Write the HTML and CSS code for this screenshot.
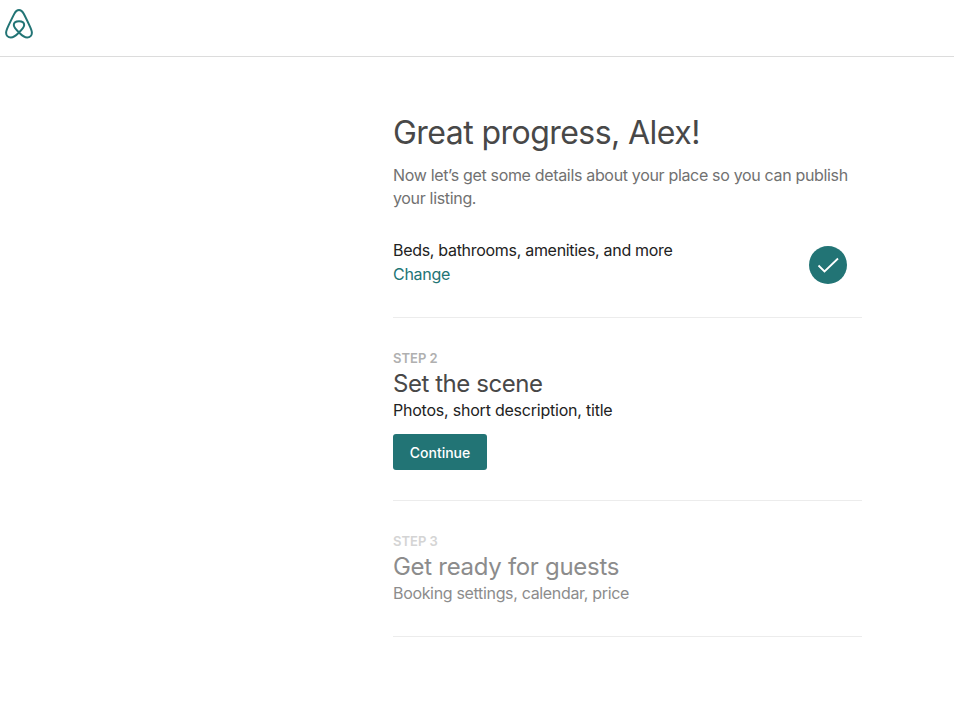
FILE: index.html
```html
<!DOCTYPE html>
<html>
<head>
    <title>Great progress</title>
    <link rel="stylesheet" href="styles.css">
</head>
<body>
    <header class="topbar">
        <svg class="logo" viewBox="0 0 28 30" width="28" height="30" fill="none" stroke="#227475" stroke-width="2">
            <path d="M14 23.5C10.5 20 8.8 17.8 8.8 16C8.8 13.6 11 12.2 14 12.2C17 12.2 19.2 13.6 19.2 16C19.2 17.8 17.5 20 14 23.5C10.8 26.8 8.2 28.6 5.8 28.6C3 28.6 1.1 26.4 1.1 23.8C1.1 22 1.8 20.2 3.6 16.4C5.4 12.6 7.6 8 9.4 4.6C10.6 2.4 12 1.1 14 1.1C16 1.1 17.4 2.4 18.6 4.6C20.4 8 22.6 12.6 24.4 16.4C26.2 20.2 26.9 22 26.9 23.8C26.9 26.4 25 28.6 22.2 28.6C19.8 28.6 17.2 26.8 14 23.5Z"/>
        </svg>
    </header>

    <main class="content">
        <h1>Great progress, Alex!</h1>
        <p class="intro">Now let’s get some details about your place so you can publish your listing.</p>

        <!-- Step 1, done -->
        <section class="step step-done">
            <div>
                <div class="step-desc">Beds, bathrooms, amenities, and more</div>
                <a class="change" href="#">Change</a>
            </div>
            <svg class="check" viewBox="0 0 38 38" width="38" height="38">
                <circle cx="19" cy="19" r="19" fill="#227475"/>
                <path d="M9.5 19.5L15.5 25.5L29 12.5" fill="none" stroke="#fff" stroke-width="1.8"/>
            </svg>
        </section>

        <!-- Step 2 -->
        <section class="step step-current">
            <div class="step-label">STEP 2</div>
            <h2>Set the scene</h2>
            <div class="step-desc">Photos, short description, title</div>
            <button type="button">Continue</button>
        </section>

        <!-- Step 3 -->
        <section class="step step-locked">
            <div class="step-label">STEP 3</div>
            <h2>Get ready for guests</h2>
            <div class="step-desc">Booking settings, calendar, price</div>
        </section>
    </main>
</body>
</html>
```

FILE: styles.css
```css
* { box-sizing: border-box; }
body { margin: 0; font-family: "Inter", "Liberation Sans", sans-serif; color: #222; background: #fff; }
.topbar { height: 57px; border-bottom: 1px solid #dcdcdc; padding: 9px 0 0 5px; }
.logo { display: block; }
.content { width: 469px; margin-left: 393px; padding-top: 56px; }
h1 { margin: 0; font-size: 32px; line-height: 40px; font-weight: 400; color: #484848; letter-spacing: -0.55px; }
.intro { margin: 11px 0 0; font-size: 16px; line-height: 23px; color: #717171; letter-spacing: -0.33px; }
.step { border-bottom: 1px solid #ececec; }
.step-done { display: flex; justify-content: space-between; align-items: flex-start; height: 108px; padding: 29px 15px 0 0; }
.step-desc { font-size: 16px; line-height: 23px; color: #222; letter-spacing: -0.3px; }
.change { display: block; font-size: 16px; line-height: 24px; color: #227475; text-decoration: none; letter-spacing: -0.28px; }
.check { display: block; margin-top: 7px; }
.step-label { font-size: 13px; line-height: 20px; font-weight: 600; color: #b0b0b0; }
h2 { margin: 1px 0 0; font-size: 24px; line-height: 30px; font-weight: 400; color: #484848; letter-spacing: -0.45px; }
.step-current { height: 183px; padding-top: 30px; }
.step-current .step-desc { letter-spacing: -0.22px; }
.step-locked { height: 136px; padding-top: 30px; }
.step-locked .step-label { color: #d4d4d4; }
.step-locked h2 { color: #8c8c8c; letter-spacing: -0.3px; }
.step-locked .step-desc { color: #8c8c8c; letter-spacing: -0.33px; }
button { display: block; width: 94px; height: 36px; margin-top: 12px; padding: 0; background: #227475; color: #fff; border: none; border-radius: 3px; font-family: inherit; font-size: 14px; font-weight: 500; cursor: pointer; }
```
